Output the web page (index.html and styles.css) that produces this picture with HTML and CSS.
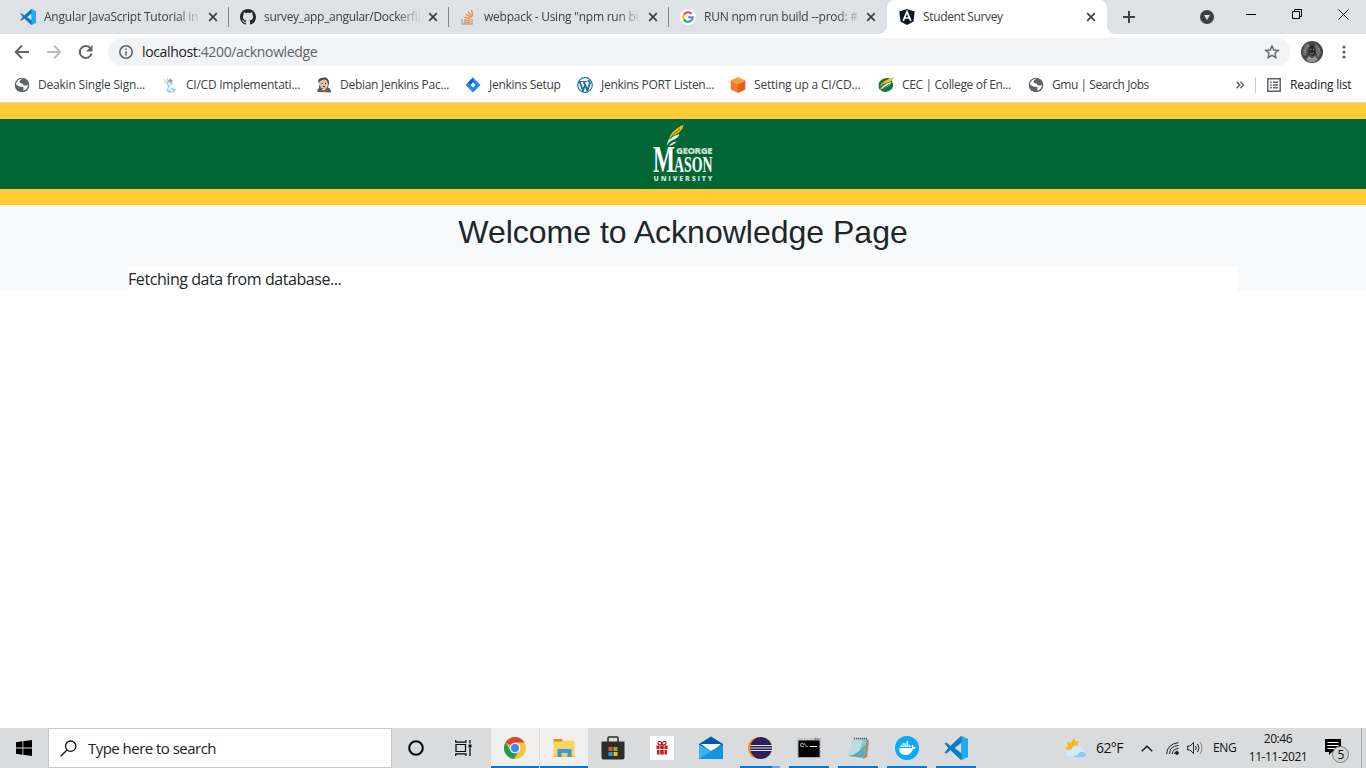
FILE: index.html
```html
<!DOCTYPE html>
<html lang="en">
<head>
<meta charset="utf-8">
<title>Student Survey</title>
<link rel="stylesheet" href="styles.css">
</head>
<body>
<svg class="defs" width="0" height="0">
  <symbol id="vscode" viewBox="0 0 24 24"><path fill="#0a7cc4" d="M17 0 6.500 9.800 2.300 6.500.5 7.300 4.200 12 .5 16.700l1.800.8 4.200-3.300L17 24l1-.4V.4zM17.500 6.800v10.400L10.600 12z" fill-rule="evenodd"/><path fill="#24a9ef" d="M17.500 0 24 3v18l-6.500 3z"/></symbol>
  <symbol id="close" viewBox="0 0 10 10"><path d="M1.200 1.200 8.800 8.800M8.800 1.200 1.200 8.800" stroke="#3c4043" stroke-width="1.700" fill="none"/></symbol>
  <symbol id="globe" viewBox="0 0 16 16"><circle cx="8" cy="8" r="7.300" fill="#5f6368"/><path d="M9 1.800C6 3 5.400 4 5.600 5.200c.4 1.400 2 .8 3 1.600 1 .7.400 1.500 1.600 1.700 1.300.2 2 .2 3.800-.7-.2 3.200-2 5.200-4.700 6 .5-1.200-.2-1.800.2-2.800.2-.6-.4-1-1.300-1.200-1.400-.3-2.700.3-4-.8L2 7.200C2.600 4.200 5 1.600 9 1.800z" fill="#fff"/><path d="M8.500 3.600h3v2.200H9z" fill="#5f6368"/></symbol>
</svg>

<header class="tabs">
  <div class="tab"><svg class="fav"><use href="#vscode"/></svg><span class="title fade">Angular JavaScript Tutorial in</span><svg class="x"><use href="#close"/></svg></div>
  <div class="tab"><svg class="fav" viewBox="0 0 16 16"><path fill="#24292e" d="M8 0C3.580 0 0 3.580 0 8c0 3.540 2.290 6.530 5.470 7.590.4.070.55-.17.55-.38v-1.490c-2.010.37-2.530-.49-2.690-.94-.09-.23-.48-.94-.82-1.130-.28-.15-.68-.52-.01-.53.63-.01 1.080.58 1.230.82.72 1.210 1.870.87 2.330.66.07-.52.28-.87.51-1.070-1.780-.2-3.640-.89-3.640-3.950 0-.87.31-1.590.82-2.150-.08-.2-.36-1.020.08-2.120 0 0 .67-.21 2.200.82a7.600 7.600 0 0 1 4 0c1.530-1.040 2.200-.82 2.200-.82.44 1.100.16 1.920.08 2.120.51.56.82 1.270.82 2.150 0 3.070-1.870 3.750-3.650 3.950.29.25.54.73.54 1.480v2.200c0 .21.15.46.55.38A8 8 0 0 0 16 8c0-4.420-3.580-8-8-8z"/></svg><span class="title fade t2">survey_app_angular/Dockerfil</span><svg class="x"><use href="#close"/></svg></div>
  <div class="tab"><svg class="fav" viewBox="0 0 16 16" fill="none"><path d="M2 10v5h10v-5" stroke="#a5a7aa" stroke-width="1.300"/><path d="M3.800 13.200h6.500M4 10.800l6.400.7M4.600 8.100l6 1.900M6 5.300l5.300 3.300M8.200 2.800l3.900 4.800M11.500 1l1.300 5.700" stroke="#f48024" stroke-width="1.200"/></svg><span class="title fade t3">webpack - Using "npm run bu</span><svg class="x"><use href="#close"/></svg></div>
  <div class="tab last"><svg class="fav" viewBox="0 0 16 16" fill="none" stroke-width="2.100"><circle cx="8" cy="8" r="8" fill="#fff"/><path d="M11.600 4.700A4.800 4.800 0 0 0 3.900 5.700" stroke="#ea4335"/><path d="M3.900 5.700a4.800 4.800 0 0 0 0 4.700" stroke="#fbbc05"/><path d="M3.900 10.400a4.800 4.800 0 0 0 7.300 1.200" stroke="#34a853"/><path d="M11.200 11.600a4.800 4.800 0 0 0 1.500-3.400H8.200" stroke="#4285f4"/></svg><span class="title fade t4">RUN npm run build --prod: #</span><svg class="x"><use href="#close"/></svg></div>
  <div class="tab active"><svg class="fav" viewBox="0 0 16 16"><path fill="#101622" d="m8 0 7.700 2.500-1.200 10L8 16l-6.500-3.500-1.200-10z"/><path d="m4.200 11.800 3.800-9 3.800 9M5.700 9h4.600" stroke="#fff" stroke-width="1.700" fill="none"/></svg><span class="title t5">Student Survey</span><svg class="x"><use href="#close"/></svg></div>
  <svg class="plus" viewBox="0 0 12 12"><path d="M6 0v12M0 6h12" stroke="#3c4043" stroke-width="2"/></svg>
  <svg class="drop" viewBox="0 0 14 14"><circle cx="7" cy="7" r="7" fill="#3c4043"/><path d="M4 5h6L7 10z" fill="#dee1e6"/></svg>
  <svg class="win" viewBox="0 0 104 14" fill="none" stroke="#000"><path d="M0 7.500h10M46.500 4.500h7v7h-7zM48.500 4.500v-2h7v7h-2M92.500 2.500l10 10M102.500 2.500l-10 10"/></svg>
</header>

<nav class="toolbar">
  <svg class="navs" viewBox="0 0 80 16" fill="none" stroke-width="1.900"><path d="M15 8H2M8 1.500 1.700 8 8 14.500" stroke="#5f6368"/><path d="M33 8h13M40 1.500 46.300 8 40 14.500" stroke="#babcbe"/><path d="M76 3.700A6 6 0 1 0 77.600 9.500" stroke="#5f6368" stroke-width="2"/><path d="M78.500 1v6.500H72z" fill="#5f6368"/></svg>
  <div class="omni">
    <svg class="info" viewBox="0 0 14 14"><circle cx="7" cy="7" r="6.200" fill="none" stroke="#5f6368" stroke-width="1.500"/><path d="M7 6.200v4.300M7 3.400v1.500" stroke="#5f6368" stroke-width="1.500"/></svg>
    <span class="url"><b>localhost</b>:4200/acknowledge</span>
    <svg class="star" viewBox="0 0 16 16"><path d="m8 2 1.800 4 4.400.4-3.300 2.900 1 4.300L8 11.400l-3.900 2.200 1-4.300-3.300-2.900L6.200 6z" fill="none" stroke="#5f6368" stroke-width="1.400"/></svg>
  </div>
  <svg class="avatar" viewBox="0 0 22 22"><circle cx="11" cy="11" r="11" fill="#464648"/><path d="m3 5 4-3 2 3-3 4-1 6-3-1zM14 2l4 4 2 6-3 5-2-6z" fill="#6f6e70"/><path d="M8 5q4-2 6 2l1 5-3 3-4-2z" fill="#29292b"/><path d="m5 18 3-3 3 2 3-2 3 3-3 3H8z" fill="#929294"/><path d="m8.500 8 2 .5m1.500 0 1.500-.5M9 12l2 1 2-1M2 9l3 1m12-3 2 2M6 4l2 2" stroke="#a2a2a4" stroke-width=".8"/></svg>
  <svg class="dots" viewBox="0 0 4 14" fill="#5f6368"><circle cx="2" cy="2" r="1.600"/><circle cx="2" cy="7" r="1.600"/><circle cx="2" cy="12" r="1.600"/></svg>
</nav>

<nav class="bookmarks">
  <div class="bm"><svg><use href="#globe"/></svg><span>Deakin Single Sign...</span></div>
  <div class="bm b2"><svg viewBox="0 0 16 16"><path d="M1 2q3-1 4 3l-1 3z" fill="#d5e9f5"/><path d="m5 1 2 3 1-3 2 3 1-2-1 4-4-1z" fill="#f2673b"/><path d="M4 5q4-2 7 1l-2 3q-2 1 1 2l4 1-1 3-6 1-3-3 2-3z" fill="#9dd4f2"/><path d="m6 6 3 3-2 3 4 2" stroke="#e9f7ff" stroke-width="1.500" fill="none"/></svg><span>CI/CD Implementati...</span></div>
  <div class="bm b3"><svg viewBox="0 0 16 16"><path d="M2 15q-2-2 1-4V5Q3 1 8 .500q5 0 5 6l-1 4q3 1 3 5z" fill="#49636d"/><path d="M3 5q2-4 6-3 3 1 3 6-1 4-3 4-4 0-5-3-2-1-1-4z" fill="#dfc3a2"/><path d="M2.500 6Q1 2 5 1l5-.5q3 2 3 6l-1 1q0-5-4-5L4 4z" fill="#574740"/><path d="M5.500 6.500h1M9 6.500h1M7 9.500h2" stroke="#333"/><path d="m6 12 2 3 2-3z" fill="#fff"/><path d="m7 13 4-1 .5 3L9 14l-2 1z" fill="#d33833"/></svg><span>Debian Jenkins Pac...</span></div>
  <div class="bm b4"><svg viewBox="0 0 16 16"><path d="m8 .5 7.500 7.500L8 15.500.5 8z" fill="#2684ff"/><path d="M8 .5v5L5.500 8 3 5.500z" fill="#0b5bd3"/><path d="m8 5.500 2.500 2.500L8 10.500 5.500 8z" fill="#fff"/></svg><span>Jenkins Setup</span></div>
  <div class="bm b5"><svg viewBox="0 0 16 16"><circle cx="8" cy="8" r="7.300" fill="#fff" stroke="#21759b" stroke-width="1.200"/><path d="M2.500 4.500 6 13.500l2.200-6M6.800 4.500l3.500 9 2.500-7q0-3-2-2.500" fill="none" stroke="#21759b" stroke-width="1.900"/><path d="M1.800 4.500h4M6.200 4.500h4" stroke="#21759b"/></svg><span>Jenkins PORT Listen...</span></div>
  <div class="bm"><svg viewBox="0 0 16 16"><path d="m8 0 7.300 3.500L8 7.200.700 3.500z" fill="#fa9b3d"/><path d="M.7 3.500 8 7.200V16L.7 12.400z" fill="#f47b28"/><path d="M15.300 3.500 8 7.200V16l7.300-3.600z" fill="#e85e20"/></svg><span>Setting up a CI/CD...</span></div>
  <div class="bm b7"><svg viewBox="0 0 16 16"><path d="M1 11.500Q-1 4 6 1.500 10 .5 13 2L15 6.500q1 5-4 7.500-5 2-8-.5z" fill="#16733a"/><path d="M1.500 10Q4 3.500 15.800.300 15 4 10 5.500 4.500 6.500 1.500 10z" fill="#f9bd18"/><path d="M2 12.500Q6 6.500 13.500 5 11 10.500 2 12.500z" fill="#fff"/><path d="M3 12q5-3 9.500-6-3 5-9.500 6z" fill="#16733a"/></svg><span>CEC | College of En...</span></div>
  <div class="bm b8"><svg><use href="#globe"/></svg><span>Gmu | Search Jobs</span></div>
  <svg class="more" viewBox="0 0 8 8"><path d="m.7.8 3 3.200-3 3.200m3.800-6.400 3 3.200-3 3.200" fill="none" stroke="#5f6368" stroke-width="1.500"/></svg>
  <div class="reading"><svg viewBox="0 0 14 14"><path d="M.8.800h12.400v12.400H.8z" fill="none" stroke="#5f6368" stroke-width="1.500"/><path d="M3 4.200h1.700M6 4.200h5M3 7h1.700M6 7h5M3 9.800h1.700M6 9.800h5" stroke="#5f6368" stroke-width="1.400"/></svg><span>Reading list</span></div>
</nav>

<main class="page">
  <div class="banner">
    <svg class="logo" viewBox="0 0 64 62"><path d="M16 17Q18 7 31.500.5 31 7 23 11q-5 2-7 6z" fill="#f4b71e"/><path d="M14.500 22q1-9 13-12-1 4-6.500 6-4 1.500-6.500 6zM17 22q2-4 7.500-4.500-2 3-7.500 4.500z" fill="#e3ede6"/><path d="M17 15q5-6 11-10" stroke="#006633" stroke-width=".7" fill="none"/>
      <text class="mason" x="1" y="48" font-size="37" textLength="22" lengthAdjust="spacingAndGlyphs">M</text><text class="mason" x="22" y="48" font-size="24" textLength="38.500" lengthAdjust="spacingAndGlyphs">ASON</text><text class="sans" x="24" y="29.500" font-size="9.500" textLength="36.500" lengthAdjust="spacing">GEORGE</text><text class="sans" x="1.500" y="57" font-size="7" textLength="59">UNIVERSITY</text></svg>
  </div>
  <section class="content">
    <h2>Welcome to Acknowledge Page</h2>
    <div class="status"><span>Fetching data from database...</span></div>
  </section>
</main>

<footer class="taskbar">
  <div class="start"><svg viewBox="0 0 16 16"><path d="m0 2.200 6.500-.9v6.300H0zM7.300 1.200 16 0v7.600H7.300zM0 8.400h6.500v6.300l-6.500-.9zM7.300 8.400H16V16l-8.700-1.200z"/></svg></div>
  <div class="search"><svg viewBox="0 0 17 17" fill="none" stroke="#111" stroke-width="1.300"><circle cx="10.700" cy="6.200" r="5.200"/><path d="M7 10 .7 16.300"/></svg><span>Type here to search</span></div>
  <div class="cell ring"><svg width="16" height="16" viewBox="0 0 16 16"><circle cx="8" cy="8" r="6.800" fill="none" stroke="#000" stroke-width="2"/></svg></div>
  <div class="cell"><svg width="17" height="16" viewBox="0 0 17 16" fill="none" stroke="#000" stroke-width="1.200"><path d="M1 4.500h9.500v7H1zM.7 0v2.200h10.200V0M.7 16v-2.200h10.200V16M15 0v3.500M15 8v8"/><path d="M13.500 4.500h3v3h-3z" fill="#000" stroke="none"/></svg></div>
  <div class="apps">
    <div class="app on full"><svg viewBox="0 0 24 24"><circle cx="12" cy="12" r="11" fill="#fdc33b"/><path d="M12 12 2.500 6.500A11 11 0 0 1 21.500 6.500H12z" fill="#d9463b"/><path d="M2.500 6.500A11 11 0 0 0 11 23l5-8.500-4 1.500-5-2.500z" fill="#1b9d58"/><circle cx="12" cy="12" r="5.300" fill="#fff"/><circle cx="12" cy="12" r="4.200" fill="#4587ef"/></svg></div>
    <div class="app on full"><svg viewBox="0 0 24 24"><path d="M1.500 3h9v6h-9z" fill="#d99a08"/><path d="M1.500 5.500H10l1-1h11.500V21h-21z" fill="#fbd361"/><path d="M1.500 19.500h21V21h-21z" fill="#f3bb3d"/><path d="M5.500 21v-8h14v8h-4v-4h-6v4z" fill="#3b98d8"/></svg></div>
    <div class="app"><svg viewBox="0 0 24 24"><path d="M7 7V2q0-1 1-1h8q1 0 1 1v5" fill="none" stroke="#2b2b2b" stroke-width="1.600"/><path d="M.5 5.500h23v16q0 2-2 2h-19q-2 0-2-2z" fill="#2d2d2d"/><path d="M7.500 11h4v4h-4z" fill="#f25022"/><path d="M12.500 11h4v4h-4z" fill="#7fba00"/><path d="M7.500 16h4v4h-4z" fill="#00a4ef"/><path d="M12.500 16h4v4h-4z" fill="#ffb900"/></svg></div>
    <div class="app"><svg viewBox="0 0 24 24"><path fill="#fff" d="M0 0h24v24H0z"/><path d="M6.500 9.500h11V13h-11zM7 14h10v4.500H7z" fill="#c8171c"/><path d="M9.800 9.500v9M14.200 9.500v9" stroke="#fff" stroke-width=".7"/><path d="M12 9Q8 9 8 7t2-1.500 2 3.500q0-3 2-3.500T16 7t-4 2z" fill="none" stroke="#c8171c" stroke-width="1.200"/></svg></div>
    <div class="app"><svg viewBox="0 0 24 24"><path d="M0 8 12 .500 24 8v9H0z" fill="#0758a8"/><path d="M2 8h20l-9 8z" fill="#fff"/><path d="M0 8.500 12 15l12-6.500V23H0z" fill="#32b8ed"/><path d="M0 23 12 15l12-6.500V23z" fill="#1695df"/></svg></div>
    <div class="app on split"><svg viewBox="0 0 24 24"><path d="M11 1Q0 2 0 12t11 11Q4 20 4 12T11 1z" fill="#f7941e"/><circle cx="13" cy="12" r="11" fill="#2c2255"/><path d="M2 9.500h22M2 12h22M2 14.500h22" stroke="#ded9ea" stroke-width="1.100"/></svg></div>
    <div class="app on"><svg viewBox="0 0 24 24"><path d="M.5 2h23v20H.5z" fill="#aaa"/><path d="M1.500 4.500h21v16.500h-21z"/><path d="M1 3h16" stroke="#e3e3e3"/><path d="M18 3h4" stroke="#557" stroke-dasharray="1 1"/><text class="cmd" x="3" y="11" textLength="9">C:\.</text><path d="M13 10.500h7" stroke="#fff"/></svg></div>
    <div class="app on"><svg viewBox="0 0 24 24"><path d="m20 3 3 1-2 17-4 2z" fill="#a68a6f"/><path d="M8 2h13l-3 20-16-2z" fill="#8dc4cf"/><path d="m8 3 9 1-5 17-11-1z" fill="#b9dfe3"/><path d="M3 20q9-2 16-11l-1 13z" fill="#62a8b7"/><path d="M8 2.500h13" stroke="#555" stroke-dasharray="1 1" stroke-width="1.500"/></svg></div>
    <div class="app on"><svg viewBox="0 0 24 24"><circle cx="12" cy="12" r="12" fill="#0baaf7"/><path d="M4 12h13q-1-2 .5-3.500Q19 10 18.500 11q2-.3 2.500.5-1 1.500-3 1.500-2 6-8 6-6-.500-6-7z" fill="#fff"/><path d="M5.500 10.200h10M7.500 8h6M11.500 6h2" stroke="#fff" stroke-width="1.700" stroke-dasharray="1.700 .4"/></svg></div>
    <div class="app on"><svg><use href="#vscode"/></svg></div>
  </div>
  <div class="tray">
    <svg class="weather" viewBox="0 0 22 20"><path d="m9 0 1.500 3.500 3-.5-1 5-6 5-3-.5L0 10l3-2-1-4 4 .5z" fill="#fbb71d"/><path d="M4 19Q0 18 1 14q1-3 5-2Q8 6 13 8q4 1 4 4 4 0 4 4 0 3-4 3z" fill="#d2ebfb"/><path d="M4 19q7 0 10-4 4-3 7 1 0 3-4 3z" fill="#8fc7ee"/></svg>
    <span class="temp">62°F</span>
    <svg class="chev" viewBox="0 0 12 7"><path d="m.7 6.300 5.300-5 5.300 5" fill="none" stroke="#111" stroke-width="1.400"/></svg>
    <svg class="wifi" viewBox="0 0 13 13" fill="none" stroke="#222"><path d="M.7 12Q1 2 12.500.7M3.500 12q0-8 9-8.500M6.300 12q0-5 6.200-5.500"/><circle cx="11" cy="11" r="1.400" fill="#222"/><path d="M8.500 12q.2-2.500 3-3"/></svg>
    <svg class="vol" viewBox="0 0 16 14" fill="none" stroke="#222"><path d="M.6 5h2.500l3.400-3.500v11L3.100 9H.6z"/><path d="M8.500 5q1.500 2 0 4M10.500 3q3 4 0 8" /><path d="M13 1q4 6 0 12" stroke="#888"/></svg>
    <span class="lang">ENG</span>
    <div class="clock"><span>20:46</span><span>11-11-2021</span></div>
    <svg class="note" viewBox="0 0 25 25"><path d="M0 0h16v13H7l-3 3v-3H0z"/><path d="M2.500 3.500h11M2.500 6.500h11M2.500 9.500h8" stroke="#fff"/><circle cx="15.500" cy="15.500" r="8" fill="#d2d3d5" stroke="#777"/><text class="count" x="12.400" y="19.800">5</text></svg>
  </div>
</footer>
</body>
</html>
```
FILE: styles.css
```css
* { box-sizing: border-box; }
body {
  margin: 0;
  width: 1366px;
  height: 768px;
  overflow: hidden;
  display: flex;
  flex-direction: column;
  background: #fff;
  font: 12px/16px "Open Sans", "Noto Sans", sans-serif;
  color: #3c4043;
}
svg { display: block; flex: none; }
.defs { position: absolute; }
span { white-space: nowrap; }

/* tab strip */
.tabs { height: 34px; flex: none; display: flex; background: #dee1e6; padding-left: 9px; align-items: center; }
.tab { width: 220px; height: 34px; display: flex; align-items: center; padding: 0 11px; position: relative; }
.tab:not(.last):not(.active)::after { content: ""; position: absolute; right: 0; top: 7px; width: 1px; height: 20px; background: #808387; }
.tab.last { width: 218px; }
.fav { width: 16px; height: 16px; margin-right: 8px; }
.title { width: 156px; margin-right: 8px; overflow: hidden; letter-spacing: -.22px; }
.t2 { letter-spacing: -.32px; }
.t3 { letter-spacing: -.24px; }
.t5 { letter-spacing: -.35px; }
.last .title { margin-right: 9px; }
.fade { -webkit-mask-image: linear-gradient(90deg, #000 132px, transparent 158px); mask-image: linear-gradient(90deg, #000 132px, transparent 158px); }
.x { width: 10px; height: 10px; }
.active { background: #fff; border-radius: 8px 8px 0 0; padding-left: 12px; }
.active::before, .active::after { content: ""; position: absolute; bottom: 0; width: 8px; height: 8px; }
.active::before { left: -8px; background: radial-gradient(circle at 0 0, transparent 7.500px, #fff 8px); }
.active::after { right: -8px; background: radial-gradient(circle at 100% 0, transparent 7.500px, #fff 8px); }
.plus { width: 12px; height: 12px; margin-left: 16px; }
.drop { width: 14px; height: 14px; margin-left: 65px; }
.win { width: 104px; height: 14px; margin: -6px 0 0 32px; }

/* toolbar */
.toolbar { height: 36px; flex: none; display: flex; align-items: center; padding-left: 14px; }
.navs { width: 80px; height: 16px; }
.omni { width: 1182px; height: 28px; margin-left: 14px; border-radius: 14px; background: #f1f3f4; display: flex; align-items: center; padding: 0 10px 0 11px; }
.info { width: 14px; height: 14px; margin-right: 9px; }
.url { flex: 1; font-size: 14px; letter-spacing: -.36px; color: #5f6368; }
.url b { font-weight: 400; color: #202124; }
.star { width: 16px; height: 16px; }
.avatar { width: 22px; height: 22px; margin-left: 11px; }
.dots { width: 4px; height: 14px; margin-left: 19px; }

/* bookmarks bar */
.bookmarks {
  height: 33px; flex: none; padding: 0 0 3px 14px; border-bottom: 1px solid #d7dae0;
  display: grid; align-items: center;
  grid-template-columns: 148px 154px 148px 112px 153px 148px 150px 209px 19px 1fr;
}
.bm { display: flex; align-items: center; gap: 8px; letter-spacing: -.2px; }
.b2 { letter-spacing: -.24px; }
.b3 { letter-spacing: -.28px; }
.b4 { padding-left: 1px; letter-spacing: -.27px; }
.b5 { padding-left: 1px; letter-spacing: -.29px; }
.b5 + .bm, .b7, .b8 { padding-left: 1px; }
.b7 { letter-spacing: -.34px; }
.b8 { letter-spacing: -.46px; }
.bm svg { width: 16px; height: 16px; }
.more { width: 8px; height: 8px; }
.reading { display: flex; align-items: center; gap: 9px; border-left: 1px solid #c9ccd1; padding-left: 11px; letter-spacing: -.25px; }
.reading svg { width: 14px; height: 14px; }
.reading span { color: #202124; }

/* web page */
.page { flex: 1; }
.banner { height: 102px; background: #006633; border: solid #ffcc33; border-width: 16px 0; display: flex; justify-content: center; }
.logo { width: 64px; height: 62px; margin: 5px 0 0 2px; overflow: visible; }
.mason { font-family: "Liberation Serif", serif; font-weight: 700; fill: #fff; }
.sans { font-family: "Open Sans", sans-serif; font-weight: 800; fill: #cfe0d6; }
.content { height: 86px; background: #f8f9fb; padding: 8px 128px 0; }
h2 { margin: 0 0 16px; font: 400 32px/38px "Liberation Sans", Arial, sans-serif; text-align: center; color: #212529; letter-spacing: 0; }
.status { height: 24px; background: #fff; font-size: 16px; line-height: 25px; color: #212529; }
.status span { letter-spacing: -.43px; }

/* taskbar */
.taskbar { height: 40px; flex: none; display: flex; background: #dadbdd; color: #111; }
.start { width: 48px; display: flex; align-items: center; padding-left: 16px; }
.start svg { width: 16px; height: 16px; }
.search { width: 344px; background: #fff; border: 1px solid #c8c8c9; display: flex; align-items: center; padding-left: 11px; }
.search svg { width: 17px; height: 17px; }
.search span { margin-left: 11px; font-size: 15px; letter-spacing: -.53px; color: #222; }
.cell { width: 51px; display: flex; align-items: center; justify-content: center; padding-right: 4px; }
.ring { width: 48px; padding: 0; }
.apps { display: flex; gap: 1px; }
.app { width: 48px; display: flex; align-items: center; justify-content: center; }
.app svg { width: 24px; height: 24px; }
.on { background: linear-gradient(#0078d7, #0078d7) bottom / 40px 2px no-repeat; }
.full { background: linear-gradient(#0078d7, #0078d7) bottom / 48px 2px no-repeat #f1f0ef; }
.split { background: linear-gradient(90deg, #0078d7 80%, #67a9e2 80%) bottom / 40px 2px no-repeat; }
.cmd { font: 6px "Liberation Mono", monospace; fill: #fff; }
.tray { flex: 1; display: flex; align-items: center; padding-left: 85px; background: linear-gradient(#a9aaac, #a9aaac) 381px 0 / 1px 100% no-repeat; }
.weather { width: 22px; height: 20px; }
.temp { width: 45px; margin-left: 9px; font-size: 14px; letter-spacing: -.6px; }
.chev { width: 12px; height: 7px; }
.wifi { width: 13px; height: 13px; margin-left: 13px; }
.vol { width: 16px; height: 14px; margin-left: 8px; }
.lang { width: 26px; margin-left: 10px; letter-spacing: -.4px; }
.clock { width: 60px; margin-left: 9px; display: flex; flex-direction: column; align-items: center; line-height: 18px; letter-spacing: -.4px; }
.note { width: 25px; height: 25px; margin: 7px 0 0 17px; }
.count { font: 12px "Open Sans", sans-serif; }
```
